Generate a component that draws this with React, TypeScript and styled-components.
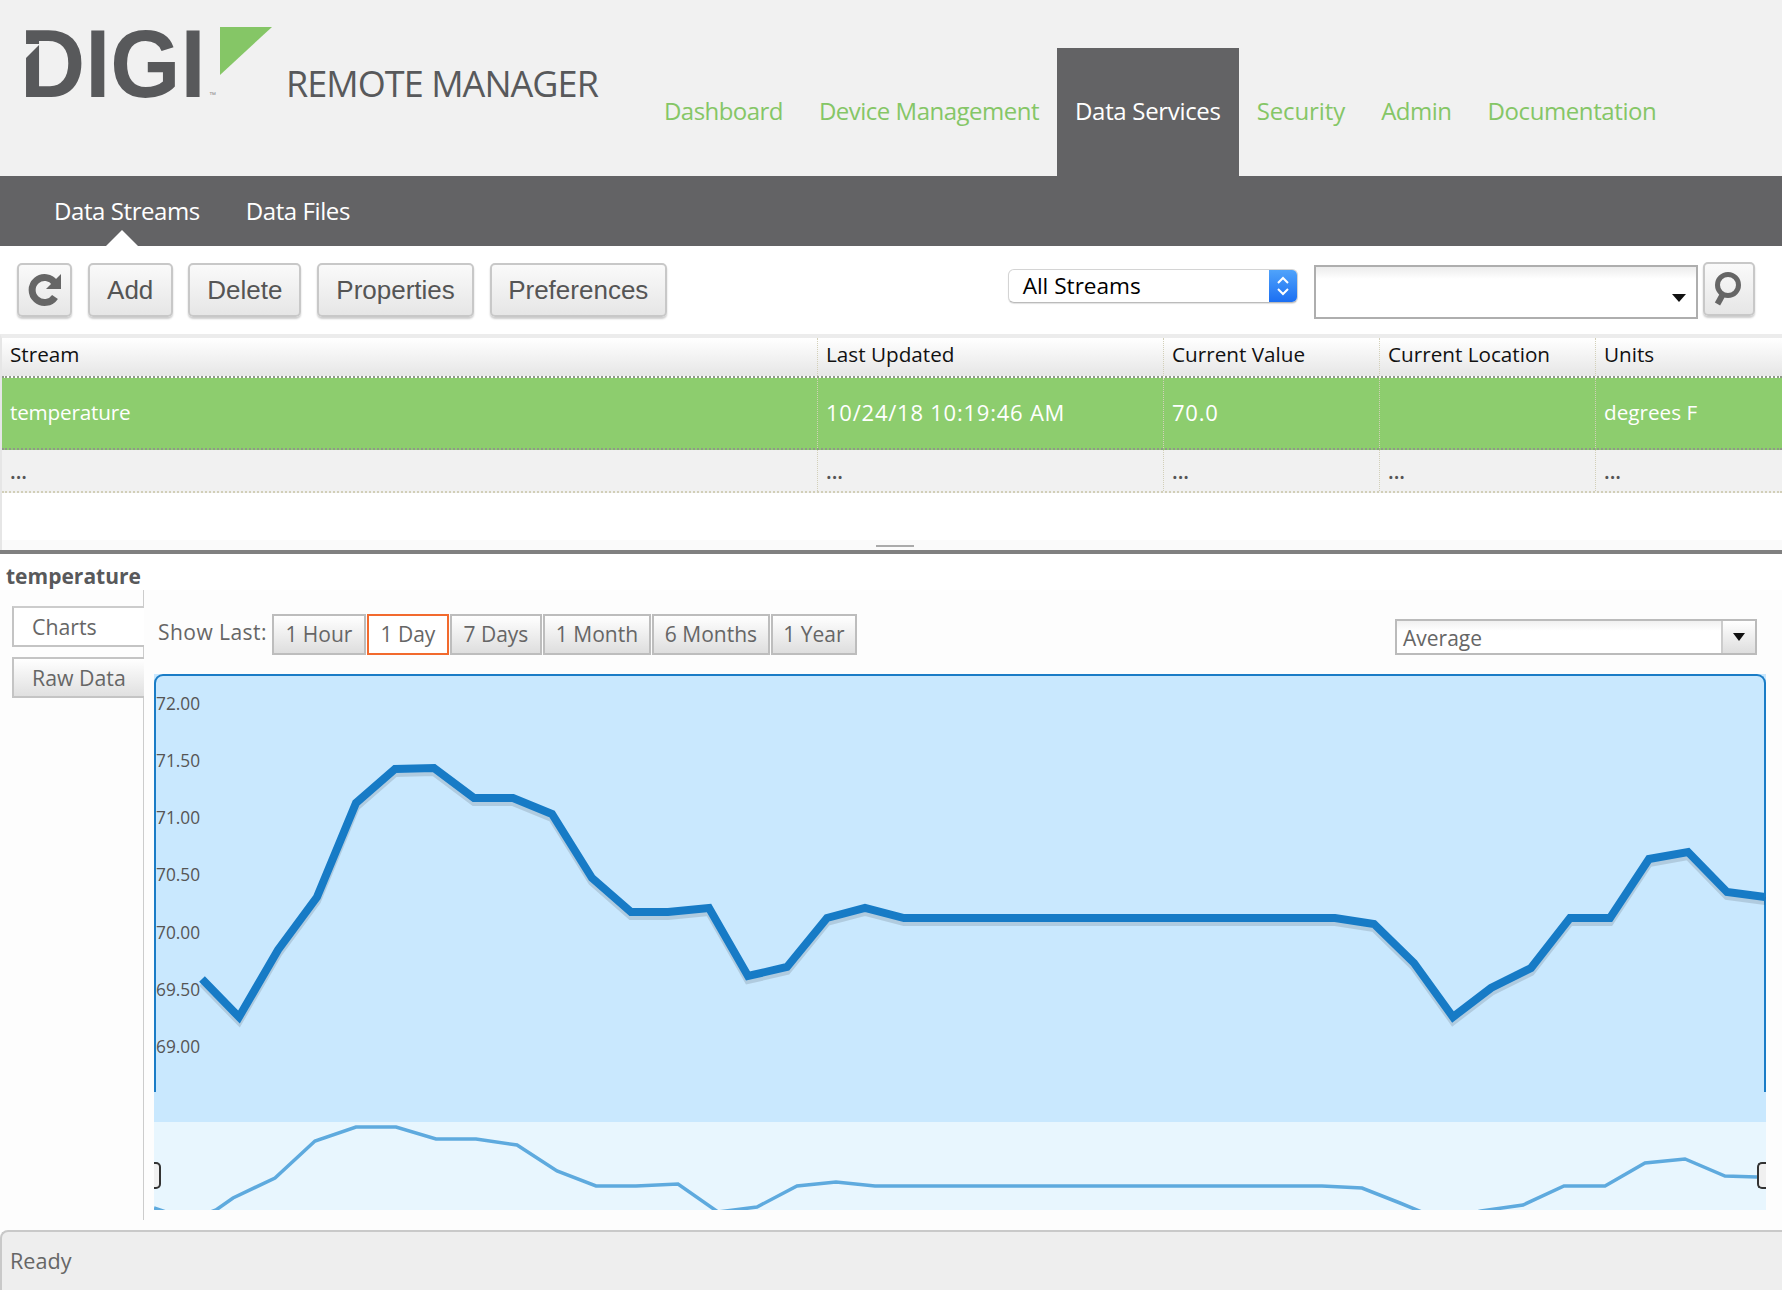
import React from "react";
import styled, { createGlobalStyle } from "styled-components";

const GlobalStyle = createGlobalStyle`
    html, body {
        margin: 0;
        padding: 0;
        background: #fff;
        font-family: "Open Sans", "Liberation Sans", sans-serif;
    }
    * {
        box-sizing: border-box;
    }
`;

const Page = styled.div`
    width: 100%;
    height: 1290px;
    display: flex;
    flex-direction: column;
    overflow: hidden;
`;

const Header = styled.header`
    height: 176px;
    flex: none;
    background: #f1f1f1;
    display: flex;
`;

const Brand = styled.div`
    width: 646px;
    flex: none;
    display: flex;
    align-items: flex-start;
`;

const LogoMark = styled.svg`
    width: 280px;
    height: 130px;
    flex: none;
`;

const BrandName = styled.span`
    margin: 60px 0 0 6px;
    font-size: 36px;
    line-height: 48px;
    color: #58595b;
    white-space: nowrap;
    letter-spacing: -0.95px;
`;

const Nav = styled.nav`
    display: flex;
    align-items: flex-end;
`;

const NavTab = styled.div<{ $active?: boolean; $spacing: number }>`
    height: 128px;
    padding: 46px 18px 0;
    font-size: 24px;
    line-height: 34px;
    letter-spacing: ${(p) => p.$spacing}px;
    white-space: nowrap;
    color: ${(p) => (p.$active ? "#fff" : "#85c666")};
    background: ${(p) => (p.$active ? "#636365" : "transparent")};
`;

const SubBar = styled.div`
    height: 70px;
    flex: none;
    background: #636365;
    display: flex;
    align-items: center;
    gap: 46px;
    padding: 0 0 0 54px;
`;

const SubTab = styled.div<{ $active?: boolean }>`
    position: relative;
    font-size: 24px;
    line-height: 34px;
    letter-spacing: -0.42px;
    color: #fff;
    &::after {
        content: "";
        display: ${(p) => (p.$active ? "block" : "none")};
        position: absolute;
        left: 52px;
        top: 36px;
        border-left: 16px solid transparent;
        border-right: 16px solid transparent;
        border-bottom: 16px solid #fff;
    }
`;

const Toolbar = styled.div`
    height: 88px;
    flex: none;
    display: flex;
    align-items: flex-start;
    padding: 17px 27px 0 17px;
    gap: 15.7px;
    background: #fff;
`;

const ToolButton = styled.button<{ $width: number }>`
    width: ${(p) => p.$width}px;
    height: 54px;
    padding: 0;
    border: 2px solid #c8c8c8;
    border-radius: 5px;
    background: linear-gradient(#fafafa, #e6e6e6);
    box-shadow: 0 2px 2px rgba(0, 0, 0, 0.2);
    font-family: "Liberation Sans", Arial, sans-serif;
    font-size: 26px;
    color: #555;
    display: flex;
    align-items: center;
    justify-content: center;
`;

const StreamSelect = styled.div`
    margin: 6px 0 0 auto;
    width: 290px;
    height: 34px;
    display: flex;
    justify-content: space-between;
    background: #fff;
    border: 1px solid #d4d4d4;
    border-bottom-color: #bbb;
    border-radius: 6px;
    box-shadow: 0 1px 1px rgba(0, 0, 0, 0.12);
    font-size: 22.6px;
    line-height: 32px;
    color: #000;
    padding-left: 14px;
    overflow: hidden;
`;

const SelectArrows = styled.span`
    width: 28px;
    background: linear-gradient(#4fa3fb, #1c6ff2);
    display: flex;
    align-items: center;
    justify-content: center;
`;

const SearchBox = styled.div`
    margin: 2px 0 0 1px;
    width: 384px;
    height: 54px;
    border: 2px solid #aeaeae;
    background: linear-gradient(#ececec, #fff 24%);
    display: flex;
    align-items: center;
    justify-content: flex-end;
    padding: 11px 10px 0 0;
`;

const DownArrow = styled.span`
    width: 0;
    height: 0;
    border-left: 7px solid transparent;
    border-right: 7px solid transparent;
    border-top: 8px solid #111;
`;

const SearchButton = styled(ToolButton)`
    margin: -1px 0 0 -11px;
`;

const TableArea = styled.section`
    height: 216px;
    flex: none;
    border-top: 4px solid #ececec;
    border-left: 2px solid #e6e6e6;
    display: flex;
    flex-direction: column;
`;

const Row = styled.div<{ $kind: "head" | "selected" | "odd" }>`
    display: grid;
    grid-template-columns: 815px 346px 216px 216px 1fr;
    flex: none;
    height: ${(p) => (p.$kind === "head" ? 40 : p.$kind === "selected" ? 72 : 43)}px;
    color: ${(p) => (p.$kind === "selected" ? "#fff" : p.$kind === "head" ? "#111" : "#555")};
    background: ${(p) =>
        p.$kind === "head"
            ? "linear-gradient(#fff, #e6e6e6)"
            : p.$kind === "selected"
            ? "#8dcd6e"
            : "#f1f1f1"};
    border-bottom: 2px dotted ${(p) => (p.$kind === "odd" ? "#d2cfb8" : "#8f9a88")};
`;

const Cell = styled.div<{ $kind: "head" | "selected" | "odd" }>`
    padding: ${(p) => (p.$kind === "head" ? "0 8px 6px" : p.$kind === "selected" ? "0 8px 2px" : "0 8px")};
    font-size: 20.7px;
    font-weight: ${(p) => (p.$kind === "odd" ? 600 : 400)};
    display: flex;
    align-items: center;
    white-space: nowrap;
    & + & {
        border-left: 1.5px dotted ${(p) => (p.$kind === "odd" ? "#d2cfb8" : "#9a9a90")};
    }
`;

const NameText = styled.span`
    letter-spacing: -0.2px;
`;

const NumberText = styled.span`
    font-size: 22px;
    letter-spacing: 0.77px;
`;

const SplitArea = styled.div`
    margin-top: auto;
    height: 10px;
    background: #fafafa;
    display: flex;
    justify-content: center;
    padding-left: 6px;
`;

const SplitHandle = styled.span`
    width: 38px;
    height: 2px;
    margin-top: 5px;
    background: #aaa;
`;

const SplitBar = styled.div`
    height: 4px;
    flex: none;
    background: #808080;
`;

const Title = styled.div`
    height: 36px;
    flex: none;
    padding-left: 6px;
    font-size: 21px;
    font-weight: 700;
    line-height: 44px;
    color: #58595b;
`;

const Details = styled.section`
    flex: 1;
    display: flex;
    min-height: 0;
    background: #fdfdfd;
`;

const Sidebar = styled.div`
    width: 144px;
    flex: none;
    height: 630px;
    border-right: 1px solid #ccc;
    padding: 16px 0 0 12px;
    display: flex;
    flex-direction: column;
    gap: 10px;
`;

const SideTab = styled.div<{ $active?: boolean }>`
    height: 41px;
    margin-right: -1px;
    padding-left: 18px;
    font-size: 21.3px;
    line-height: 38px;
    color: #666;
    border: 2px solid #c4c4c4;
    border-right: 0;
    border-top-color: ${(p) => (p.$active ? "#ccc" : "#c4c4c4")};
    background: ${(p) => (p.$active ? "#fff" : "linear-gradient(#fff, #e0e0e0)")};
`;

const Main = styled.div`
    flex: 1;
    min-width: 0;
    padding: 0 16px 0 10px;
    display: flex;
    flex-direction: column;
`;

const RangeRow = styled.div`
    height: 84px;
    flex: none;
    padding: 24px 9px 0 4px;
    display: flex;
    align-items: flex-start;
`;

const RangeLabel = styled.span`
    font-size: 21px;
    line-height: 36px;
    letter-spacing: 0.45px;
    color: #666;
    margin-right: 5px;
`;

const RangeGroup = styled.div`
    display: flex;
    gap: 1px;
`;

const RangeButton = styled.button<{ $active?: boolean; $width: number }>`
    width: ${(p) => p.$width}px;
    height: 41px;
    padding: 0 0 2px;
    font-family: inherit;
    font-size: 21px;
    color: #666;
    border: 2px solid ${(p) => (p.$active ? "#f26a2e" : "#bdbdbd")};
    background: ${(p) => (p.$active ? "#fff" : "linear-gradient(#fff, #dedede)")};
    white-space: nowrap;
`;

const Aggregate = styled.div`
    margin: 5px 0 0 auto;
    width: 362px;
    height: 36px;
    display: flex;
    border: 2px solid #bbb;
    background: linear-gradient(#f0f0f0, #fff 30%);
    font-size: 21px;
    line-height: 35px;
    color: #666;
`;

const AggregateValue = styled.span`
    flex: 1;
    padding-left: 6px;
`;

const AggregateArrow = styled.span`
    width: 34px;
    border-left: 2px solid #ccc;
    background: linear-gradient(#fff, #dedede);
    display: flex;
    align-items: center;
    justify-content: center;
`;

const SmallArrow = styled(DownArrow)`
    border-left-width: 6px;
    border-right-width: 6px;
    border-top-width: 8px;
`;

const PlotPanel = styled.div`
    position: relative;
    height: 448px;
    flex: none;
    background: #c9e8fe;
    &::before {
        content: "";
        position: absolute;
        left: 0;
        right: 0;
        top: 0;
        height: 416px;
        border: 2px solid #1a7cc6;
        border-bottom: 0;
        border-radius: 9px 9px 0 0;
    }
`;

const OverviewPanel = styled.div`
    position: relative;
    height: 88px;
    flex: none;
    background: #e8f6fe;
`;

const PlotSvg = styled.svg`
    position: absolute;
    left: 0;
    top: 0;
    width: 100%;
    height: 100%;
    display: block;
`;

const AxisLabel = styled.text`
    font-family: "Open Sans", sans-serif;
    font-size: 17.3px;
    fill: #555;
`;

const RangeHandle = styled.span<{ $side: "left" | "right" }>`
    position: absolute;
    top: 40px;
    width: 9px;
    height: 27px;
    background: #f0f0f0;
    border: 2px solid #333;
    ${(p) =>
        p.$side === "left"
            ? "left: 0; border-left: 0; border-radius: 0 5px 5px 0; width: 7px;"
            : "right: 0; border-right: 0; border-radius: 5px 0 0 5px;"}
`;

const StatusBar = styled.footer`
    height: 60px;
    flex: none;
    background: #eee;
    border-top: 2px solid #c9c9c9;
    border-left: 2px solid #c9c9c9;
    border-top-left-radius: 8px;
    padding-left: 8px;
    font-size: 21.6px;
    line-height: 58px;
    color: #666;
`;

const columns = ["Stream", "Last Updated", "Current Value", "Current Location", "Units"];

const navItems: [string, number][] = [
    ["Dashboard", -0.55],
    ["Device Management", -0.5],
    ["Data Services", -0.32],
    ["Security", -0.1],
    ["Admin", -0.5],
    ["Documentation", -0.4],
];

const tools: [string, number][] = [
    ["Add", 85],
    ["Delete", 113],
    ["Properties", 157],
    ["Preferences", 177],
];

const ranges: [string, number][] = [
    ["1 Hour", 94],
    ["1 Day", 82],
    ["7 Days", 92],
    ["1 Month", 108],
    ["6 Months", 118],
    ["1 Year", 86],
];

const yLabels: [string, number][] = [
    ["72.00", 704],
    ["71.50", 761],
    ["71.00", 818],
    ["70.50", 875],
    ["70.00", 933],
    ["69.50", 990],
    ["69.00", 1047],
];

const mainLine =
    "202,979 239,1017 278,950 317,897 356,803 395,769 434,768 474,798 513,798 552,814 592,878 631,912 668,912 709,908 748,976 787,967 827,918 865,908 904,918 1335,918 1374,924 1414,963 1453,1017 1491,988 1531,968 1570,918 1610,918 1649,859 1688,852 1727,892 1765,897";

const overviewLine =
    "154,1208 166,1212 205,1214 216,1210 233,1198 275,1178 315,1141 356,1127 396,1127 436,1139 476,1139 517,1145 557,1171 596,1186 636,1186 678,1184 718,1212 757,1207 797,1186 836,1182 875,1186 1322,1186 1362,1188 1400,1203 1441,1220 1481,1211 1523,1205 1564,1186 1605,1186 1645,1163 1685,1159 1725,1176 1757,1177";

const RefreshIcon = () => (
    <svg width="36" height="36" viewBox="-1 0 36 36">
        <path d="M27 11 A12.5 12.5 0 1 0 27 25" fill="none" stroke="#666" strokeWidth="7" />
        <polygon points="33,2 33,17 18,17" fill="#666" />
    </svg>
);

const SearchIcon = () => (
    <svg width="30" height="42" viewBox="0 0 30 42">
        <circle cx="14" cy="17" r="10.5" fill="none" stroke="#666" strokeWidth="5" />
        <path d="M9 26 L3.5 36" fill="none" stroke="#666" strokeWidth="6" />
    </svg>
);

const App: React.FC = () => {
    return (
        <Page>
            <GlobalStyle />
            <Header>
                <Brand>
                    <LogoMark viewBox="0 0 280 130">
                        <text
                            transform="translate(20 97) scale(0.94 1)"
                            fontFamily="'Liberation Sans', sans-serif"
                            fontWeight="700"
                            fontSize="96"
                            fill="#58595b"
                        >
                            DIGI
                        </text>
                        <polygon points="26,44 40,44 26,58" fill="#f1f1f1" />
                        <text x="209" y="97" fontFamily="'Liberation Sans', sans-serif" fontSize="7" fill="#888">
                            ™
                        </text>
                        <polygon points="220,27 272,27 220,75" fill="#85c666" />
                    </LogoMark>
                    <BrandName>REMOTE MANAGER</BrandName>
                </Brand>
                <Nav>
                    {navItems.map(([item, spacing]) => (
                        <NavTab key={item} $active={item === "Data Services"} $spacing={spacing}>
                            {item}
                        </NavTab>
                    ))}
                </Nav>
            </Header>
            <SubBar>
                <SubTab $active>Data Streams</SubTab>
                <SubTab>Data Files</SubTab>
            </SubBar>
            <Toolbar>
                <ToolButton $width={55}>
                    <RefreshIcon />
                </ToolButton>
                {tools.map(([label, width]) => (
                    <ToolButton key={label} $width={width}>
                        {label}
                    </ToolButton>
                ))}
                <StreamSelect>
                    All Streams
                    <SelectArrows>
                        <svg width="16" height="24" viewBox="0 0 16 24">
                            <path d="M3 9 L8 4 L13 9 M3 15 L8 20 L13 15" fill="none" stroke="#fff" strokeWidth="2" />
                        </svg>
                    </SelectArrows>
                </StreamSelect>
                <SearchBox>
                    <DownArrow />
                </SearchBox>
                <SearchButton $width={52}>
                    <SearchIcon />
                </SearchButton>
            </Toolbar>
            <TableArea>
                <Row $kind="head">
                    {columns.map((c) => (
                        <Cell key={c} $kind="head">
                            {c}
                        </Cell>
                    ))}
                </Row>
                <Row $kind="selected">
                    <Cell $kind="selected">
                        <NameText>temperature</NameText>
                    </Cell>
                    <Cell $kind="selected">
                        <NumberText>10/24/18 10:19:46 AM</NumberText>
                    </Cell>
                    <Cell $kind="selected">
                        <NumberText>70.0</NumberText>
                    </Cell>
                    <Cell $kind="selected" />
                    <Cell $kind="selected">degrees F</Cell>
                </Row>
                <Row $kind="odd">
                    {columns.map((c) => (
                        <Cell key={c} $kind="odd">
                            ...
                        </Cell>
                    ))}
                </Row>
                <SplitArea>
                    <SplitHandle />
                </SplitArea>
            </TableArea>
            <SplitBar />
            <Title>temperature</Title>
            <Details>
                <Sidebar>
                    <SideTab $active>Charts</SideTab>
                    <SideTab>Raw Data</SideTab>
                </Sidebar>
                <Main>
                    <RangeRow>
                        <RangeLabel>Show Last:</RangeLabel>
                        <RangeGroup>
                            {ranges.map(([r, width]) => (
                                <RangeButton key={r} $active={r === "1 Day"} $width={width}>
                                    {r}
                                </RangeButton>
                            ))}
                        </RangeGroup>
                        <Aggregate>
                            <AggregateValue>Average</AggregateValue>
                            <AggregateArrow>
                                <SmallArrow />
                            </AggregateArrow>
                        </Aggregate>
                    </RangeRow>
                    <PlotPanel>
                        <PlotSvg viewBox="154 674 1612 448">
                            {yLabels.map(([label, y]) => (
                                <AxisLabel key={label} x="156" y={y + 6}>
                                    {label}
                                </AxisLabel>
                            ))}
                            <polyline points={mainLine} fill="none" stroke="#000" strokeOpacity="0.12" strokeWidth="8" transform="translate(0 4)" />
                            <polyline points={mainLine} fill="none" stroke="#177bc6" strokeWidth="8" />
                        </PlotSvg>
                    </PlotPanel>
                    <OverviewPanel>
                        <PlotSvg viewBox="154 1122 1612 88">
                            <polyline points={overviewLine} fill="none" stroke="#5eaade" strokeWidth="3.5" />
                        </PlotSvg>
                        <RangeHandle $side="left" />
                        <RangeHandle $side="right" />
                    </OverviewPanel>
                </Main>
            </Details>
            <StatusBar>Ready</StatusBar>
        </Page>
    );
};

export default App;
